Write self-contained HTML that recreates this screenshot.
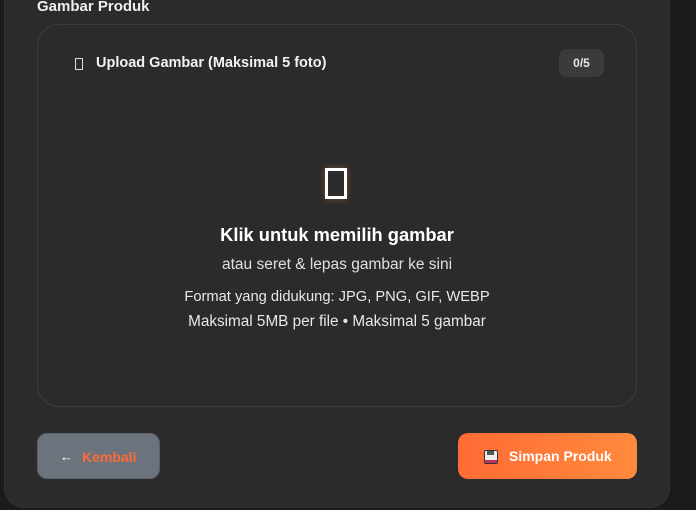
<!DOCTYPE html>
<html><head><meta charset="utf-8"><style>
*{margin:0;padding:0;box-sizing:border-box}
body{width:696px;height:510px;background:#1b1b1b;font-family:"Liberation Sans","DejaVu Sans",sans-serif;position:relative;overflow:hidden;color:#fff}
.card{position:absolute;left:4px;top:-30px;width:666px;height:538px;background:#2b2b2b;border-radius:20px;border:1px solid #333}
.t{position:absolute;white-space:nowrap}
.box{position:absolute;left:37px;top:24px;width:600px;height:383px;border:1px solid #3d3d3d;border-radius:22px;background:#2b2b2b}
.badge{position:absolute;left:559px;top:49px;width:45px;height:28px;background:#3b3b3b;border-radius:8px;font-size:12px;font-weight:bold;color:#e8e8e8;text-align:center;line-height:28px}
.btn{position:absolute;top:433px;height:46px;border-radius:10px;font-size:14px;font-weight:bold;line-height:46px}
</style></head><body>
<div class="card"></div>
<div class="t" style="left:37px;top:-2px;font-size:15px;font-weight:bold;color:#eee">Gambar Produk</div>
<div class="box"></div>
<div style="position:absolute;left:75px;top:58px;width:8px;height:12px;border:1.5px solid #ddd"></div>
<div class="t" style="left:96px;top:55px;font-size:14.5px;font-weight:bold;color:#f2f2f2">Upload Gambar (Maksimal 5 foto)</div>
<div class="badge">0/5</div>
<div style="position:absolute;left:325px;top:168px;width:22px;height:31px;border:3px solid #fff;box-shadow:0 0 6px rgba(255,140,80,.35)"></div>
<div class="t" style="left:0;width:674px;text-align:center;top:224px;font-size:18.3px;font-weight:bold">Klik untuk memilih gambar</div>
<div class="t" style="left:0;width:674px;text-align:center;top:256px;font-size:15.5px;color:#e0e0e0">atau seret &amp; lepas gambar ke sini</div>
<div class="t" style="left:0;width:674px;text-align:center;top:289px;font-size:14.7px;color:#e8e8e8">Format yang didukung: JPG, PNG, GIF, WEBP</div>
<div class="t" style="left:0;width:674px;text-align:center;top:313px;font-size:15.3px;color:#e8e8e8">Maksimal 5MB per file • Maksimal 5 gambar</div>
<div class="btn" style="left:37px;width:123px;background:#6b737c;border:1px solid #5a6068"><span style="position:absolute;left:22px;color:#fff;font-size:13px">←</span><span style="position:absolute;left:44px;color:#ff6b35">Kembali</span></div>
<div class="btn" style="left:458px;width:179px;background:linear-gradient(90deg,#ff6b35,#ff8a3d)"><span style="position:absolute;left:26px;top:17px;width:14px;height:14px;background:#eee;border:1.5px solid #333;border-radius:2px"><span style="position:absolute;left:2px;top:0;width:7px;height:4px;background:#555"></span><span style="position:absolute;left:0;bottom:0;width:100%;height:3px;background:#c0335a"></span></span><span style="position:absolute;left:51px;color:#fff">Simpan Produk</span></div>
</body></html>
